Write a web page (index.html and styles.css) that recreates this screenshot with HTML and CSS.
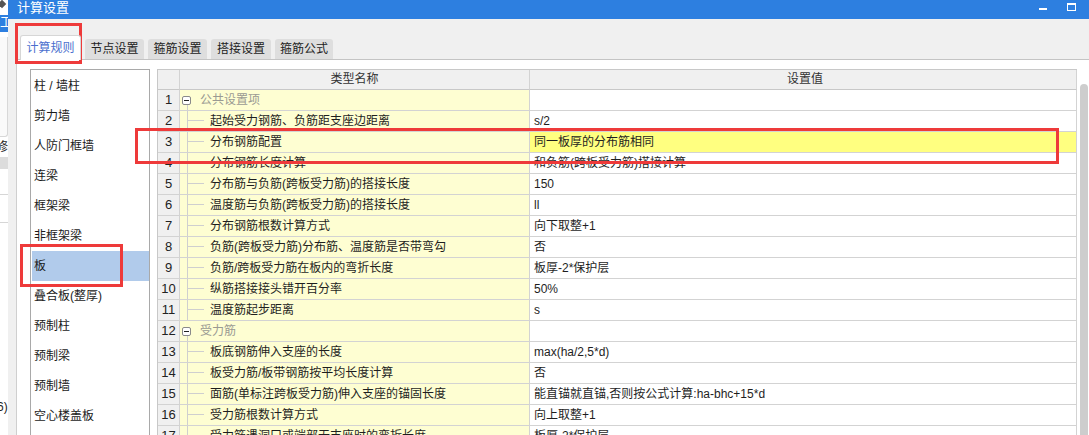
FILE: index.html
```html
<!DOCTYPE html>
<html lang="zh-CN">
<head>
<meta charset="utf-8">
<title>计算设置</title>
<link rel="stylesheet" href="styles.css">
</head>
<body>
<div class="screen">
  <div class="bgapp">
    <div class="bg-top"><span class="bg-diamond"></span></div>
    <div class="bg-sel">工</div>
    <div class="bg-panel"></div>
    <div class="bg-text">修</div>
    <div class="bg-band"></div>
    <div class="bg-rows"></div>
    <div class="bg-tail">6)</div>
  </div>

  <div class="dialog">
    <div class="titlebar">
      <span class="title">计算设置</span>
      <span class="tb-min"></span>
      <span class="tb-max"></span>
    </div>

    <div class="tabbar">
      <div class="tab active w1">计算规则</div>
      <div class="tab w2">节点设置</div>
      <div class="tab w2">箍筋设置</div>
      <div class="tab w3">搭接设置</div>
      <div class="tab w4">箍筋公式</div>
    </div>

    <div class="panel">
      <ul class="cats">
        <li>柱 / 墙柱</li>
        <li>剪力墙</li>
        <li>人防门框墙</li>
        <li>连梁</li>
        <li>框架梁</li>
        <li>非框架梁</li>
        <li class="sel">板</li>
        <li>叠合板(整厚)</li>
        <li>预制柱</li>
        <li>预制梁</li>
        <li>预制墙</li>
        <li>空心楼盖板</li>
      </ul>

      <div class="grid">
        <div class="row head">
          <div class="num"></div>
          <div class="name">类型名称</div>
          <div class="val">设置值</div>
        </div>
        <div class="row">
          <div class="num">1</div>
          <div class="name group"><span class="tog"></span><span class="gtext">公共设置项</span></div>
          <div class="val"></div>
        </div>
        <div class="row">
          <div class="num">2</div>
          <div class="name child">起始受力钢筋、负筋距支座边距离</div>
          <div class="val">s/2</div>
        </div>
        <div class="row">
          <div class="num">3</div>
          <div class="name child">分布钢筋配置</div>
          <div class="val hl">同一板厚的分布筋相同</div>
        </div>
        <div class="row">
          <div class="num">4</div>
          <div class="name child">分布钢筋长度计算</div>
          <div class="val">和负筋(跨板受力筋)搭接计算</div>
        </div>
        <div class="row">
          <div class="num">5</div>
          <div class="name child">分布筋与负筋(跨板受力筋)的搭接长度</div>
          <div class="val">150</div>
        </div>
        <div class="row">
          <div class="num">6</div>
          <div class="name child">温度筋与负筋(跨板受力筋)的搭接长度</div>
          <div class="val">ll</div>
        </div>
        <div class="row">
          <div class="num">7</div>
          <div class="name child">分布钢筋根数计算方式</div>
          <div class="val">向下取整+1</div>
        </div>
        <div class="row">
          <div class="num">8</div>
          <div class="name child">负筋(跨板受力筋)分布筋、温度筋是否带弯勾</div>
          <div class="val">否</div>
        </div>
        <div class="row">
          <div class="num">9</div>
          <div class="name child">负筋/跨板受力筋在板内的弯折长度</div>
          <div class="val">板厚-2*保护层</div>
        </div>
        <div class="row">
          <div class="num">10</div>
          <div class="name child">纵筋搭接接头错开百分率</div>
          <div class="val">50%</div>
        </div>
        <div class="row">
          <div class="num">11</div>
          <div class="name child">温度筋起步距离</div>
          <div class="val">s</div>
        </div>
        <div class="row">
          <div class="num">12</div>
          <div class="name group"><span class="tog"></span><span class="gtext">受力筋</span></div>
          <div class="val"></div>
        </div>
        <div class="row">
          <div class="num">13</div>
          <div class="name child">板底钢筋伸入支座的长度</div>
          <div class="val">max(ha/2,5*d)</div>
        </div>
        <div class="row">
          <div class="num">14</div>
          <div class="name child">板受力筋/板带钢筋按平均长度计算</div>
          <div class="val">否</div>
        </div>
        <div class="row">
          <div class="num">15</div>
          <div class="name child">面筋(单标注跨板受力筋)伸入支座的锚固长度</div>
          <div class="val">能直锚就直锚,否则按公式计算:ha-bhc+15*d</div>
        </div>
        <div class="row">
          <div class="num">16</div>
          <div class="name child">受力筋根数计算方式</div>
          <div class="val">向上取整+1</div>
        </div>
        <div class="row">
          <div class="num">17</div>
          <div class="name child">受力筋遇洞口或端部无支座时的弯折长度</div>
          <div class="val">板厚-2*保护层</div>
        </div>
      </div>

      <div class="vscroll"><div class="thumb"></div></div>
    </div>
  </div>

  <div class="mark mark-tab"></div>
  <div class="mark mark-list"></div>
  <div class="mark mark-row"></div>
</div>
</body>
</html>
```
FILE: styles.css
```css
* {
  box-sizing: border-box;
  margin: 0;
  padding: 0;
}

html, body {
  width: 1089px;
  height: 435px;
  overflow: hidden;
}

body {
  font-family: "Liberation Sans", "Noto Sans CJK SC", sans-serif;
  font-size: 12px;
  color: #1e1e1e;
  background: #ffffff;
}

.screen {
  position: relative;
  display: flex;
  width: 1089px;
  height: 435px;
}

/* background application strip at the far left */
.bgapp {
  width: 8px;
  flex: none;
  display: flex;
  flex-direction: column;
  overflow: hidden;
  background: #ffffff;
}

.bg-top {
  height: 15px;
  position: relative;
}

.bg-diamond {
  display: block;
  width: 6px;
  height: 6px;
  margin: 1px 0 0 -1px;
  background: #555555;
  transform: rotate(45deg);
}

.bg-sel {
  height: 17px;
  background: #2d7fe0;
  color: #ffffff;
  font-size: 12px;
  line-height: 17px;
  padding-left: 0;
}

.bg-panel {
  height: 100px;
  margin-top: 5px;
  border-right: 1px solid #d8d8d8;
  border-bottom: 1px solid #d8d8d8;
  border-bottom-right-radius: 3px;
  background: #fafafa;
}

.bg-text {
  height: 20px;
  line-height: 20px;
  font-size: 12px;
  margin-left: -4px;
}

.bg-band {
  height: 12px;
  background: #dcdcdc;
}

.bg-rows {
  height: 230px;
  background:
    linear-gradient(#d6d6d6, #d6d6d6) 0 25px / 100% 1px no-repeat,
    linear-gradient(#d6d6d6, #d6d6d6) 0 53px / 100% 1px no-repeat,
    #ffffff;
}

.bg-tail {
  font-size: 12px;
  line-height: 16px;
  margin-left: -3px;
}

/* dialog */
.dialog {
  flex: 1;
  display: flex;
  flex-direction: column;
  background: #f0f0f0;
  min-width: 0;
}

.titlebar {
  height: 19px;
  flex: none;
  display: flex;
  align-items: flex-start;
  background: #2d7fe0;
  color: #ffffff;
}

.title {
  padding-left: 9px;
  font-size: 13px;
  line-height: 15px;
}

.tb-min {
  margin-left: auto;
  margin-top: 8px;
  width: 8px;
  height: 2px;
  background: #ffffff;
}

.tb-max {
  margin-left: 20px;
  margin-right: 13px;
  margin-top: 3px;
  width: 9px;
  height: 8px;
  border: 1px solid #ffffff;
  border-top-width: 2px;
}

.tabbar {
  height: 40px;
  flex: none;
  display: flex;
  align-items: flex-end;
  gap: 4px;
  padding-left: 12px;
  position: relative;
  z-index: 1;
}

.tab {
  height: 20px;
  line-height: 20px;
  text-align: center;
  background: #dedede;
  border-radius: 3px 3px 0 0;
  color: #222222;
  font-size: 12px;
}

.tab.w1 { width: 61px; }
.tab.w2 { width: 59px; }
.tab.w3 { width: 60px; }
.tab.w4 { width: 58px; }

.tab.active {
  height: 25px;
  line-height: 24px;
  margin-bottom: -1px;
  background: #ffffff;
  color: #4b6fce;
  border: 1px solid #d6d6d6;
  border-bottom: none;
}

.panel {
  flex: 1;
  min-height: 0;
  display: flex;
  align-items: stretch;
  margin-left: 8px;
  padding: 9px 0 0 13px;
  background: #ffffff;
  border-top: 1px solid #c4c4c4;
  border-left: 1px solid #cfcfcf;
  overflow: hidden;
}

/* category list */
.cats {
  list-style: none;
  width: 120px;
  flex: none;
  margin-right: 7px;
  padding: 1px 0 0 1px;
  border: 1px solid #a9a9a9;
  border-bottom: none;
}

.cats li {
  height: 30px;
  line-height: 30px;
  padding-left: 2px;
  color: #1a1a1a;
  white-space: nowrap;
}

.cats li.sel {
  background: #b1cbeb;
}

/* property grid */
.grid {
  width: 920px;
  flex: none;
  border-left: 1px solid #c8c8c8;
  border-top: 1px solid #c8c8c8;
}

.row {
  display: grid;
  grid-template-columns: 22px 350px 547px;
  height: 21px;
}

.row > div {
  border-right: 1px solid #d3d3d3;
  border-bottom: 1px solid #d3d3d3;
  line-height: 20px;
  white-space: nowrap;
  overflow: hidden;
}

.row.head {
  height: 20px;
}

.row.head > div {
  background: #f0f0f0;
  text-align: center;
  line-height: 19px;
  color: #333333;
  border-bottom-color: #c8c8c8;
}

.num {
  background: #f0f0f0;
  text-align: center;
  font-size: 13px;
  color: #222222;
}

.name {
  background: #fefed2;
  color: #1e1e1e;
}

.name.group {
  display: flex;
  align-items: center;
  padding-left: 2px;
  background:
    linear-gradient(#cfcfcf, #cfcfcf) 7px 15px / 1px 100% no-repeat,
    #fefed2;
}

.tog {
  position: relative;
  width: 9px;
  height: 9px;
  flex: none;
  border: 1px solid #8a8a8a;
  border-radius: 2px;
  background: #ffffff;
}

.tog::after {
  content: "";
  position: absolute;
  left: 1px;
  top: 3px;
  width: 5px;
  height: 1px;
  background: #222222;
}

.gtext {
  margin-left: 9px;
  color: #9a9a92;
}

.name.child {
  padding-left: 30px;
  background:
    linear-gradient(#cfcfcf, #cfcfcf) 7px 0 / 1px 100% no-repeat,
    linear-gradient(#cfcfcf, #cfcfcf) 8px 9px / 16px 1px no-repeat,
    #fefed2;
}

.val {
  padding-left: 4px;
  background: #ffffff;
  color: #1e1e1e;
}

.val.hl {
  background: #ffff80;
}

.vscroll {
  width: 12px;
  flex: none;
  padding-top: 15px;
  background: #ffffff;
}

.thumb {
  margin-left: 3px;
  width: 8px;
  height: 100%;
  background: #cdcdcd;
  border-radius: 4px 4px 0 0;
}

/* red annotation frames drawn over the screenshot */
.mark {
  position: absolute;
  border: 3px solid #ee3a3a;
  pointer-events: none;
}

.mark-tab {
  left: 15px;
  top: 23px;
  width: 67px;
  height: 41px;
}

.mark-list {
  left: 20px;
  top: 244px;
  width: 103px;
  height: 43px;
}

.mark-row {
  left: 135px;
  top: 128px;
  width: 924px;
  height: 36px;
}
```
